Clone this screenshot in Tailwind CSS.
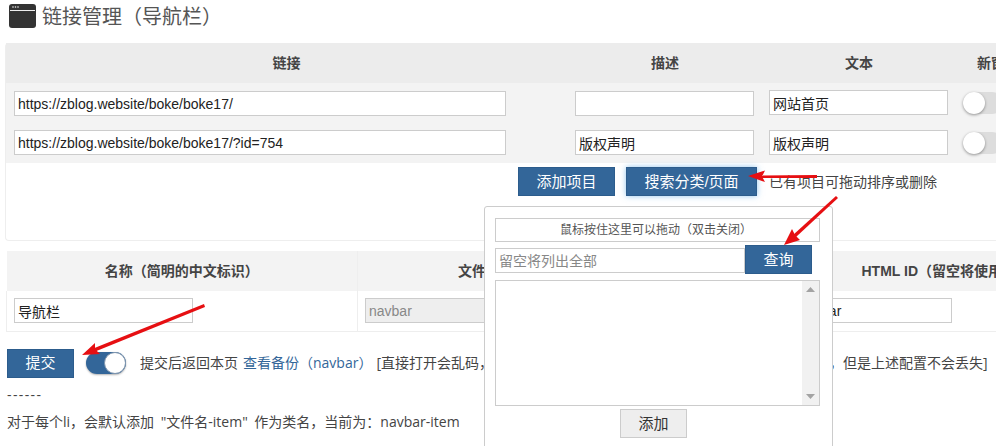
<!DOCTYPE html>
<html lang="en">
<head>
  <meta charset="UTF-8">
  <title>链接管理</title>
  <script src="https://cdn.jsdelivr.net/npm/@tailwindcss/browser@4"></script>
</head>
<body class="bg-white text-[#444] text-sm font-['Liberation_Sans','Noto_Sans_CJK_SC',sans-serif]">
  <div class="relative w-[996px] h-[446px] overflow-hidden">
    <!-- Title -->
    <header class="h-[43px] pl-[9px] pt-[4px] flex items-start gap-[6px]">
      <svg class="w-[27px] h-[24px] shrink-0" viewBox="0 0 27 24">
        <rect width="27" height="24" rx="3" fill="#333"/>
        <rect x="1" y="6" width="25" height="1" fill="#eee"/>
        <circle cx="4" cy="3" r="0.8" fill="#eee"/>
        <circle cx="6.5" cy="3" r="0.8" fill="#eee"/>
        <circle cx="9" cy="3" r="0.8" fill="#eee"/>
      </svg>
      <h1 class="text-xl leading-[26px] text-[#555] whitespace-nowrap">链接管理（导航栏）</h1>
    </header>

    <!-- Links table -->
    <div class="ml-[5px] w-[1036px] h-[198px] border-l border-b border-[#eee] rounded-sm">
      <table class="table-fixed w-[1035px]">
        <colgroup>
          <col class="w-[559px]"><col class="w-[200px]"><col class="w-[190px]"><col class="w-[86px]">
        </colgroup>
        <thead>
          <tr class="h-10 bg-[#ececec] font-bold">
            <th class="pl-[2px]">链接</th><th>描述</th><th class="pr-[2px]">文本</th><th>新窗口</th>
          </tr>
        </thead>
        <tbody class="bg-[#f3f3f3]">
          <tr class="h-10">
            <td class="align-top pl-2 pt-2"><input value="https://zblog.website/boke/boke17/" class="block w-[492px] h-[25px] px-[3px] bg-white border border-[#ccc] text-[#222]"></td>
            <td class="align-top pl-2.5 pt-2"><input class="block w-[179px] h-[25px] px-[3px] bg-white border border-[#ccc] text-[#222]"></td>
            <td class="align-top pl-[4px] pt-[7px]"><input value="网站首页" class="block w-[179px] h-[25px] px-[3px] bg-white border border-[#ccc] text-[#222]"></td>
            <td class="align-top pl-2 pt-[9px]">
              <div class="w-10 h-[22px] rounded-full bg-[#ddd]"><div class="w-[22px] h-[22px] rounded-full bg-white shadow-[0_1px_3px_rgba(0,0,0,0.4)]"></div></div>
            </td>
          </tr>
          <tr class="h-10">
            <td class="align-top pl-2 pt-[7px]"><input value="https://zblog.website/boke/boke17/?id=754" class="block w-[492px] h-[25px] px-[3px] bg-white border border-[#ccc] text-[#222]"></td>
            <td class="align-top pl-2.5 pt-[7px]"><input value="版权声明" class="block w-[179px] h-[25px] px-[3px] bg-white border border-[#ccc] text-[#222]"></td>
            <td class="align-top pl-[4px] pt-[7px]"><input value="版权声明" class="block w-[179px] h-[25px] px-[3px] bg-white border border-[#ccc] text-[#222]"></td>
            <td class="align-top pl-2 pt-[9px]">
              <div class="w-10 h-[22px] rounded-full bg-[#ddd]"><div class="w-[22px] h-[22px] rounded-full bg-white shadow-[0_1px_3px_rgba(0,0,0,0.4)]"></div></div>
            </td>
          </tr>
        </tbody>
      </table>
      <div class="pl-[512px] pt-[4px] flex items-center">
        <button class="w-[97px] h-[29px] bg-[#336699] border border-[#2c5c8c] text-white text-[15px]">添加项目</button>
        <button class="ml-[11px] w-[131px] h-[29px] bg-[#336699] border border-[#2c5c8c] text-white text-[15px] shadow-[0_0_6px_rgba(102,175,233,0.7)]">搜索分类/页面</button>
        <span class="ml-3 whitespace-nowrap">已有项目可拖动排序或删除</span>
      </div>
    </div>

    <!-- Name table -->
    <table class="table-fixed ml-[6px] mt-[10px] w-[1100px] border-b border-[#eee]">
      <colgroup>
        <col class="w-[351px]"><col class="w-[428px]"><col class="w-[321px]">
      </colgroup>
      <thead>
        <tr class="h-10 bg-[#f3f3f3] font-bold">
          <th class="border-r border-[#eee]">名称（简明的中文标识）</th>
          <th class="text-left pl-[100px]">文件名</th>
          <th class="text-left pl-[76px] whitespace-nowrap">HTML ID（留空将使用文件名）</th>
        </tr>
      </thead>
      <tbody>
        <tr class="h-10">
          <td class="align-top pl-[7px] pt-[7px] border-l border-r border-[#eee]"><input value="导航栏" class="block w-[179px] h-[25px] px-[3px] bg-white border border-[#ccc] text-[#222]"></td>
          <td class="align-top pl-[7px] pt-[7px]"><input value="navbar" disabled class="block w-[179px] h-[25px] px-[3px] bg-[#eee] border border-[#ccc] text-[#888]"></td>
          <td class="align-top pl-[9px] pt-[7px]"><input value="navbar" class="block w-[157px] h-[25px] px-[3px] bg-white border border-[#ccc] text-[#222]"></td>
        </tr>
      </tbody>
    </table>

    <!-- Submit row -->
    <div class="ml-[7px] mt-[17px] flex items-center h-[29px] whitespace-nowrap font-['Open_Sans','Noto_Sans_CJK_SC',sans-serif]">
      <button class="w-[67px] h-[29px] bg-[#336699] border border-[#2c5c8c] text-white text-[15px]">提交</button>
      <div class="ml-3 w-10 h-[22px] rounded-full bg-[#336699] flex justify-end shadow-[0_1px_2px_rgba(0,0,0,0.3)]"><div class="w-[22px] h-[22px] rounded-full bg-white border border-[#7f95ad]"></div></div>
      <span class="ml-3.5">提交后返回本页</span>
      <a class="ml-[5px] text-[#336699]">查看备份（navbar）</a>
      <span class="ml-[4px]">[直接打开会乱码，请使用文本编辑器查看；更改文件名后备份会重新生成，但是上述配置不会丢失]</span>
    </div>
    <p class="ml-[7px] mt-[7px] leading-5 tracking-[1.4px] font-['Open_Sans','Noto_Sans_CJK_SC',sans-serif]">------</p>
    <p class="ml-[7px] mt-[7px] leading-5 [word-spacing:3px] font-['Open_Sans','Noto_Sans_CJK_SC',sans-serif]">对于每个li，会默认添加 "文件名-item" 作为类名，当前为：navbar-item</p>

    <!-- Search popup -->
    <div class="absolute left-[484px] top-[206px] w-[349px] h-[260px] bg-white border border-[#ccc] rounded-t-[3px] pl-[10px] pt-[11px]">
      <div class="w-[325px] h-6 border border-[#ccc] text-xs leading-[22px] text-center pr-[3px] text-[#555]">鼠标按住这里可以拖动（双击关闭）</div>
      <div class="flex items-start mt-[3px] h-[29px]">
        <input placeholder="留空将列出全部" class="block w-[250px] h-[25px] mt-[3px] px-[3px] border border-[#ccc] placeholder:text-[#888]">
        <button class="w-[67px] h-[29px] bg-[#336699] border border-[#2c5c8c] text-white text-[15px]">查询</button>
      </div>
      <div class="w-[325px] h-[126px] mt-[6px] border border-[#ccc] flex justify-end">
        <div class="w-[17px] bg-[#f1f1f1] flex flex-col justify-between items-center py-[6px]">
          <svg class="w-[9px] h-[5px]" viewBox="0 0 9 5"><path d="M4.5 0L9 5H0z" fill="#a3a3a3"/></svg>
          <svg class="w-[9px] h-[5px]" viewBox="0 0 9 5"><path d="M4.5 5L0 0h9z" fill="#a3a3a3"/></svg>
        </div>
      </div>
      <button class="block ml-[125px] mt-[3px] w-[67px] h-[29px] bg-[#eee] border border-[#ccc] text-[#333] text-[15px]">添加</button>
    </div>

    <!-- Red arrows drawn on the screenshot -->
    <svg class="absolute inset-0 w-[996px] h-[446px] pointer-events-none" viewBox="0 0 996 446">
      <path d="M817 175L762 175.500L762 178L817 178z" fill="#e60f12"/>
      <path d="M748 176L765 170.500L762 176.500L765 182z" fill="#e60f12"/>
      <path d="M838 198L836 196L793 235L796 237z" fill="#e60f12"/>
      <path d="M784 245L792 229L795 235L800 240z" fill="#e60f12"/>
      <path d="M205 307L204 304L92 349L94 352z" fill="#e60f12"/>
      <path d="M82 355L95 343L95 349L100 354z" fill="#e60f12"/>
    </svg>
  </div>
</body>
</html>
